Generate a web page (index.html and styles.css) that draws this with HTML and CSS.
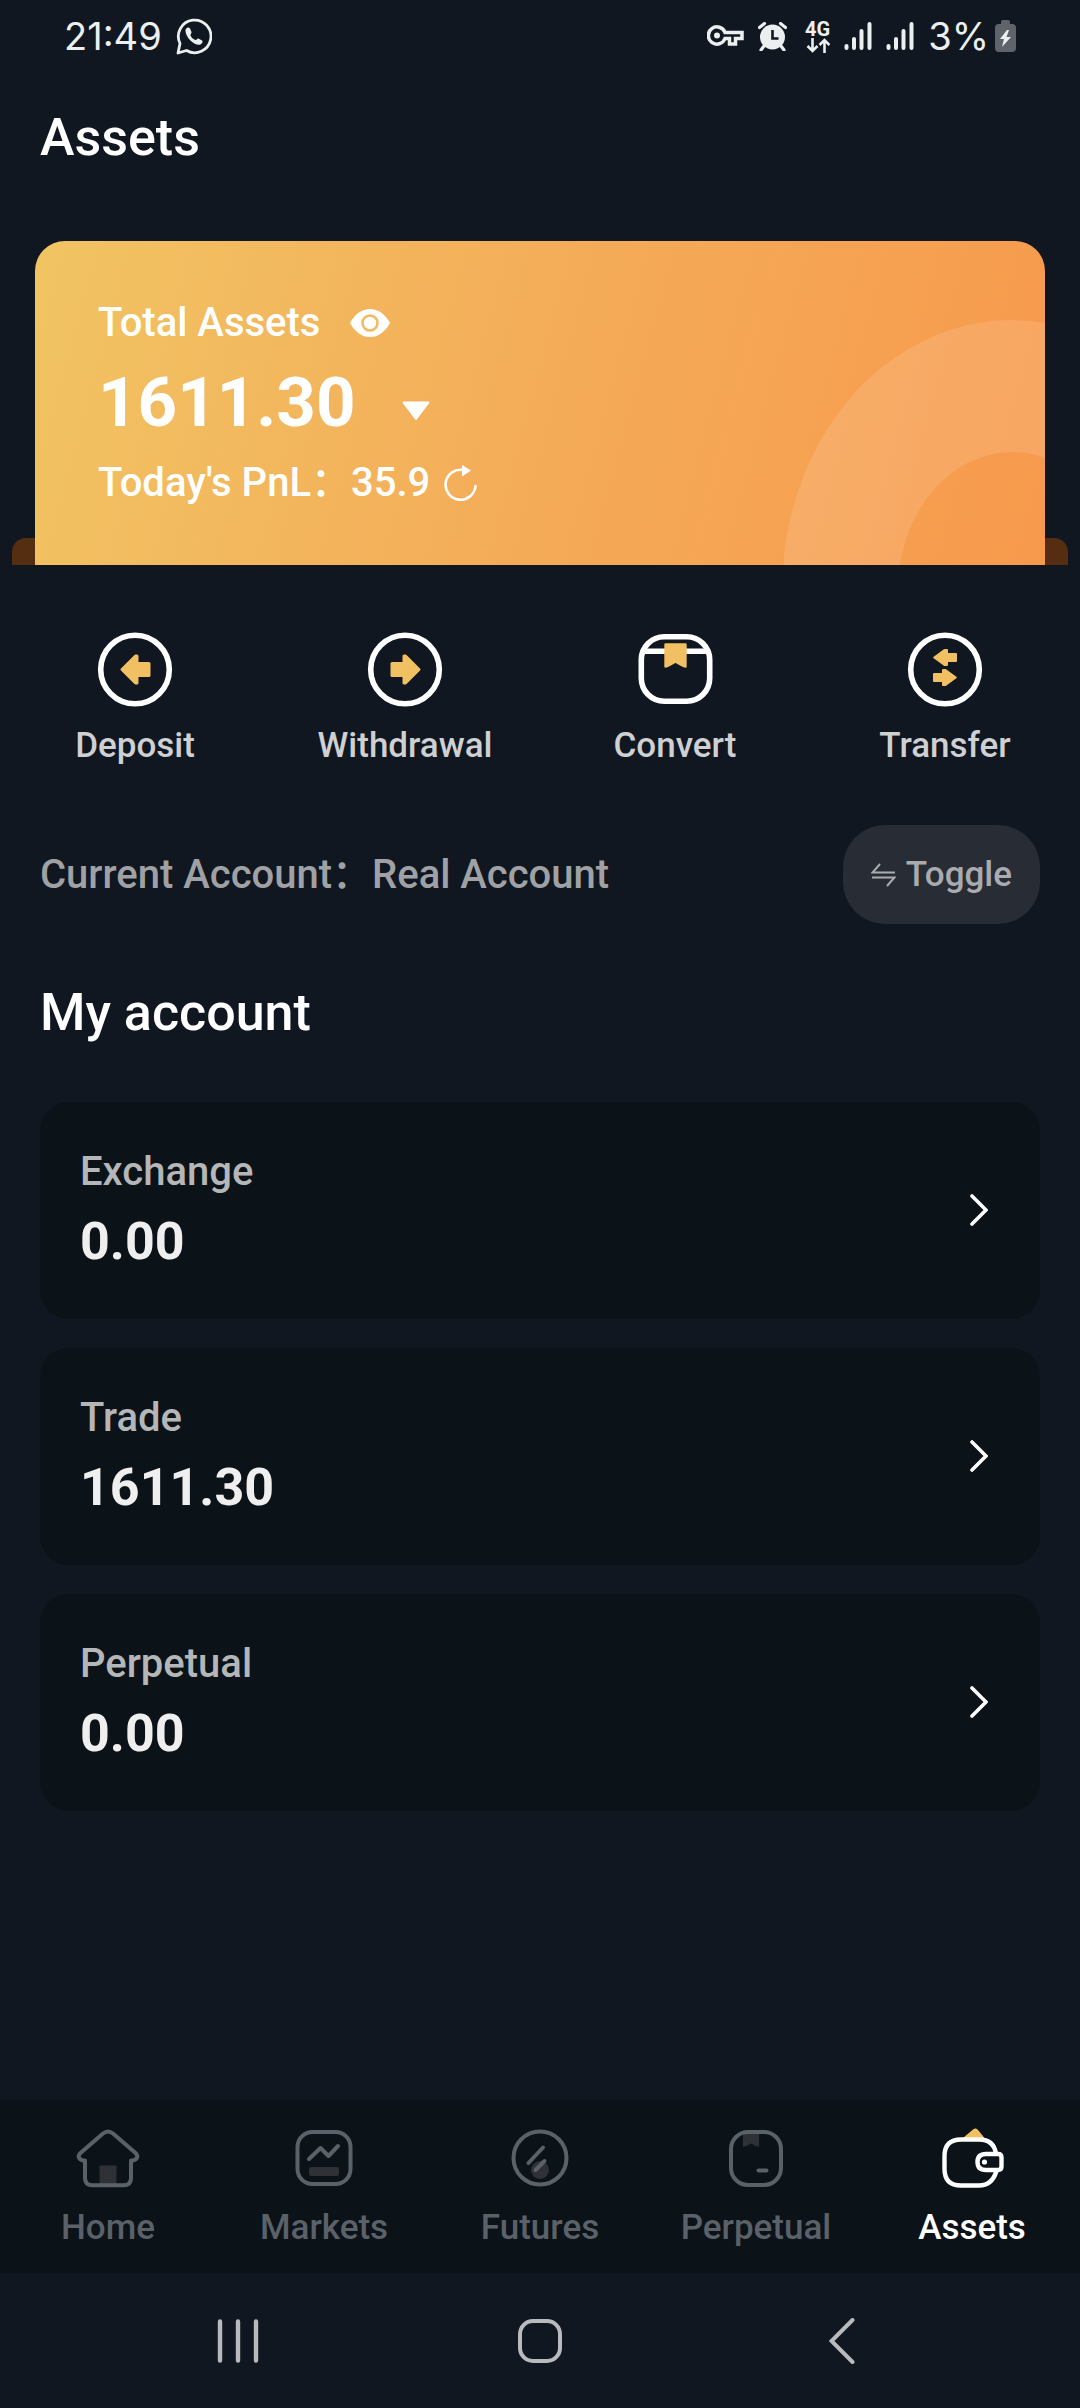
FILE: index.html
```html
<!DOCTYPE html>
<html lang="en">
<head>
    <meta charset="UTF-8">
    <meta name="viewport" content="width=device-width, initial-scale=1.0">
    <title>Assets</title>
    <link rel="stylesheet" href="styles.css">
</head>
<body>
    <div class="status-bar">
        <div class="status-left">
            <span>21:49</span>
            <svg width="36" height="37" viewBox="0 0 36 37" fill="none">
                <path d="M2 35l2-9.500A16.300 16.300 0 1 1 10.500 32.500z" stroke="#eceff0" stroke-width="2.800" stroke-linejoin="round"/>
                <path d="M9.500 13c-.5-3 3.500-4.500 4.500-2.500l1.500 3.500c.5 1-1.500 2.500-1 3.500 1 2 2.500 3.500 5 4.500 1 .3 2-1.800 3-1.400l3.500 1.900c1.700 1-.5 4.300-3 4.300-6 0-13-7.500-13.500-13.800z" fill="#eceff0"/>
            </svg>
        </div>
        <div class="status-right">
            <svg class="key-icon" width="37" height="22" viewBox="0 0 37 22" fill="none" stroke="#eceff0" stroke-width="3.500">
                <path d="M18 7.500A8.600 8.600 0 1 0 18 13.500h4.500v5.500h6v-5.500h6.500V7.500z"/>
                <circle cx="10" cy="10.500" r="3" fill="#eceff0" stroke="none"/>
            </svg>
            <svg class="alarm-icon" width="29" height="29" viewBox="0 0 29 29" fill="none">
                <circle cx="14.500" cy="15" r="12.500" fill="#eceff0"/>
                <path d="M1.500 5.500l5-4M27.500 5.500l-5-4M6 24l-3 4M23 24l3 4" stroke="#eceff0" stroke-width="3.200" stroke-linecap="round"/>
                <path d="M14.500 8v8.500h6" stroke="#101720" stroke-width="2.600"/>
            </svg>
            <div class="network">
                <span>4G</span>
                <svg width="24" height="15" viewBox="0 0 24 15" fill="none" stroke="#eceff0" stroke-width="2.600">
                    <path d="M6.500 0v13M1.500 8l5 5 5-5M18.500 15V2M13.500 7l5-5 5 5"/>
                </svg>
            </div>
            <svg class="signal-icon" width="28" height="30" viewBox="0 0 28 30" stroke="#eceff0" stroke-width="4" stroke-linecap="round">
                <path d="M2.500 25v2M10 18v9M17.500 10v17M25.500 3v24"/>
            </svg>
            <svg class="signal-icon" width="28" height="30" viewBox="0 0 28 30" stroke="#eceff0" stroke-width="4" stroke-linecap="round">
                <path d="M2.500 25v2M10 18v9M17.500 10v17M25.500 3v24"/>
            </svg>
            <div class="battery">
                <span>3%</span>
                <svg width="21" height="32" viewBox="0 0 21 32">
                    <path d="M6 4V2q0-2 2-2h5q2 0 2 2v2h2q4 0 4 4v20q0 4-4 4H4q-4 0-4-4V8q0-4 4-4z" fill="#60646a"/>
                    <path d="M12 10l-7 9h4l-2 8 9-10h-4.500l2.500-7z" fill="#eceff0"/>
                </svg>
            </div>
        </div>
    </div>

    <main class="content">
        <h1 class="page-title">Assets</h1>

        <section class="hero">
            <div class="balance-card">
                <svg class="ring" width="261" height="245" viewBox="0 0 261 245">
                    <path fill="#fff" fill-opacity=".12" fill-rule="evenodd" d="M-2 270a230 270 0 0 1 460 0a230 270 0 0 1-460 0zM114 270a114 138 0 0 0 228 0a114 138 0 0 0-228 0z"/>
                </svg>
                <div class="balance-label">
                    <span>Total Assets</span>
                    <button class="icon-button" aria-label="Hide balance">
                        <svg width="40" height="30" viewBox="0 0 40 30">
                            <path d="M0 15Q3 9 9 4.500Q14 1 20 1T31 4.500Q37 9 40 15Q37 21 31 25.500Q26 29 20 29T9 25.500Q3 21 0 15z" fill="#fff"/>
                            <circle cx="20" cy="15" r="7.500" fill="none" stroke="#f2b95f" stroke-width="2.600"/>
                        </svg>
                    </button>
                </div>
                <div class="balance-amount">
                    <span>1611.30</span>
                    <button class="icon-button" aria-label="Choose currency">
                        <svg width="28" height="20" viewBox="0 0 28 20"><path d="M1.500 1.500h25L14 18z" fill="#fff" stroke="#fff" stroke-width="2" stroke-linejoin="round"/></svg>
                    </button>
                </div>
                <div class="balance-pnl">
                    <span>Today's PnL：35.9</span>
                    <button class="icon-button" aria-label="Refresh">
                        <svg width="34" height="38" viewBox="0 0 34 38" fill="none">
                            <path d="M31.500 22a15 15 0 1 1-12-16" stroke="#fff" stroke-width="2.600" stroke-linecap="round"/>
                            <path d="M18 1l9 5.500-9 6z" fill="#fff"/>
                        </svg>
                    </button>
                </div>
            </div>
        </section>

        <nav class="actions">
            <a href="#deposit">
                <svg width="76" height="76" viewBox="0 0 76 76">
                    <circle cx="38" cy="37.500" r="34.300" fill="none" stroke="#fff" stroke-width="5.600"/>
                    <path d="M25 37.500L38.500 24h1.500v7.500h12v12H40V51h-1.500z" fill="#f0c062" stroke="#f0c062" stroke-width="3" stroke-linejoin="round"/>
                </svg>
                <span>Deposit</span>
            </a>
            <a href="#withdrawal">
                <svg width="76" height="76" viewBox="0 0 76 76">
                    <circle cx="38" cy="37.500" r="34.300" fill="none" stroke="#fff" stroke-width="5.600"/>
                    <path d="M52 37.500L38.500 24H37v7.500H25v12h12V51h1.500z" fill="#f0c062" stroke="#f0c062" stroke-width="3" stroke-linejoin="round"/>
                </svg>
                <span>Withdrawal</span>
            </a>
            <a href="#convert">
                <svg width="76" height="76" viewBox="0 0 76 76">
                    <rect x="4.300" y="4.800" width="68.400" height="64.400" rx="23" fill="none" stroke="#fff" stroke-width="5.600"/>
                    <path d="M7 19.300h63" stroke="#fff" stroke-width="5.600"/>
                    <path d="M28.500 12.500h20v22q-4-1-10-5-6 4-10 5z" fill="#f0c062" stroke="#f0c062" stroke-width="2.400" stroke-linejoin="round"/>
                </svg>
                <span>Convert</span>
            </a>
            <a href="#transfer">
                <svg width="76" height="76" viewBox="0 0 76 76" stroke-linejoin="round">
                    <circle cx="38" cy="37.500" r="34.300" fill="none" stroke="#fff" stroke-width="5.600"/>
                    <path d="M27.200 25.500L37.500 18h2.500v4h9v7h-9v4h-2.500zM48.800 45.500L38.500 38H36v4h-9v7h9v4h2.500z" fill="#f0c062" stroke="#f0c062" stroke-width="2"/>
                </svg>
                <span>Transfer</span>
            </a>
        </nav>

        <div class="current-account">
            <p>Current Account：Real Account</p>
            <button class="toggle-button">
                <svg width="25" height="24" viewBox="0 0 25 24" fill="none" stroke="#a9abae" stroke-width="2">
                    <path d="M9 1L1.500 9.500H24M1 14.500h22.500L16 23"/>
                </svg>
                <span>Toggle</span>
            </button>
        </div>

        <h2 class="section-title">My account</h2>

        <div class="account-list">
            <a class="account" href="#exchange">
                <div>
                    <p class="account-name">Exchange</p>
                    <p class="account-value">0.00</p>
                </div>
                <svg width="18" height="32" viewBox="0 0 18 32" fill="none"><path d="M2 2l14 14L2 30" stroke="#fff" stroke-width="3.600" stroke-linecap="round"/></svg>
            </a>
            <a class="account" href="#trade">
                <div>
                    <p class="account-name">Trade</p>
                    <p class="account-value">1611.30</p>
                </div>
                <svg width="18" height="32" viewBox="0 0 18 32" fill="none"><path d="M2 2l14 14L2 30" stroke="#fff" stroke-width="3.600" stroke-linecap="round"/></svg>
            </a>
            <a class="account" href="#perpetual-account">
                <div>
                    <p class="account-name">Perpetual</p>
                    <p class="account-value">0.00</p>
                </div>
                <svg width="18" height="32" viewBox="0 0 18 32" fill="none"><path d="M2 2l14 14L2 30" stroke="#fff" stroke-width="3.600" stroke-linecap="round"/></svg>
            </a>
        </div>
    </main>

    <nav class="tab-bar">
        <a href="#home">
            <svg width="64" height="64" viewBox="0 0 64 64" fill="none">
                <path d="M24 39h16v18H24z" fill="#2f3136" stroke="#2f3136" stroke-linejoin="round"/>
                <path d="M27 6.500Q32 2.500 37 6.500L59.500 26Q62.500 29 60.500 31.500Q59 33.500 55 33.500V51Q55 58.300 47.500 58.300H16.500Q9 58.300 9 51V33.500Q5 33.500 3.500 31.500Q1.500 29 4.500 26z" stroke="#5b6168" stroke-width="4" stroke-linejoin="round"/>
            </svg>
            <span>Home</span>
        </a>
        <a href="#markets">
            <svg width="64" height="64" viewBox="0 0 64 64" fill="none" stroke="#5b6168" stroke-width="4">
                <rect x="17" y="40" width="30" height="9" rx="2" fill="#2f3136" stroke="none"/>
                <rect x="5.500" y="5" width="53" height="52" rx="15"/>
                <path d="M17 32l11.500-11 8 8L46 19" stroke-linecap="round" stroke-linejoin="round"/>
            </svg>
            <span>Markets</span>
        </a>
        <a href="#futures">
            <svg width="64" height="64" viewBox="0 0 64 64" fill="none" stroke="#5b6168" stroke-width="4">
                <circle cx="32" cy="43" r="9" fill="#2f3136" stroke="none"/>
                <circle cx="32" cy="31" r="26.500"/>
                <path d="M20.500 36L35 20.500M27.500 43l9-9" stroke-linecap="round"/>
            </svg>
            <span>Futures</span>
        </a>
        <a href="#perpetual">
            <svg width="64" height="64" viewBox="0 0 64 64" fill="none" stroke="#5b6168" stroke-width="4">
                <path d="M19 6h16v14q-4-.5-8-3.500-4 3-8 3.500z" fill="#2f3136" stroke="none"/>
                <rect x="7" y="5" width="50" height="53" rx="17"/>
                <path d="M34.500 43.500h8" stroke-linecap="round"/>
            </svg>
            <span>Perpetual</span>
        </a>
        <a class="active" href="#assets">
            <svg width="64" height="64" viewBox="0 0 64 64" fill="none" stroke="#fff" stroke-width="4.400">
                <path d="M23 11L33 2.500q3-2.500 5.500 1L44.500 11z" fill="#f0c062" stroke="none"/>
                <path d="M56 27Q54 12.500 39 12.500H21Q4.500 12.500 4.500 29v13Q4.500 58.500 21 58.500H39Q52 58.500 56.500 44"/>
                <path d="M46 27h12q3.500 0 3.500 3.500v9q0 3.500-3.500 3.500H46q-8.500 0-8.500-8t8.500-8z"/>
                <circle cx="44.500" cy="35" r="2.600" fill="#fff" stroke="none"/>
            </svg>
            <span>Assets</span>
        </a>
    </nav>

    <div class="system-nav">
        <button class="icon-button" aria-label="Recent apps">
            <svg width="44" height="44" viewBox="0 0 44 44" stroke="#b9babd" stroke-width="4.400" stroke-linecap="round"><path d="M4 2.500v39M22 2.500v39M40 2.500v39"/></svg>
        </button>
        <button class="icon-button" aria-label="Home screen">
            <svg width="44" height="44" viewBox="0 0 44 44" fill="none" stroke="#b9babd" stroke-width="4"><rect x="2" y="2" width="40" height="40" rx="13"/></svg>
        </button>
        <button class="icon-button" aria-label="Back">
            <svg width="26" height="46" viewBox="0 0 26 46" fill="none" stroke="#b9babd" stroke-width="4" stroke-linecap="round"><path d="M23.500 2L2.500 23l21 21"/></svg>
        </button>
    </div>
</body>
</html>
```
FILE: styles.css
```css
* {
    box-sizing: border-box;
    margin: 0;
    padding: 0;
}

body {
    display: flex;
    flex-direction: column;
    min-height: 100vh;
    background-color: #101720;
    color: white;
    font-family: Roboto, "Noto Sans CJK SC", sans-serif;
    font-weight: 500;
    font-size: 40px;
    line-height: 48px;
}

a {
    color: inherit;
    text-decoration: none;
}

button {
    border: none;
    background: none;
    color: inherit;
    font: inherit;
    cursor: pointer;
}

svg {
    display: block;
    flex-shrink: 0;
}

.icon-button {
    display: flex;
    align-items: center;
    justify-content: center;
}

/* status bar */
.status-bar {
    display: flex;
    justify-content: space-between;
    align-items: center;
    height: 72px;
    padding: 0 64px;
    color: #eceff0;
    font-family: Inter, sans-serif;
    font-size: 38px;
    font-weight: 400;
}

.status-left, .status-right, .battery {
    display: flex;
    align-items: center;
    gap: 14px;
}

.battery {
    gap: 6px;
}

.network {
    display: flex;
    flex-direction: column;
    align-items: center;
    font-family: Roboto, sans-serif;
    font-size: 20px;
    line-height: 18px;
    font-weight: 700;
    margin-left: 4px;
}

/* page */
.content {
    padding-bottom: 60px;
}

.page-title, .section-title {
    padding: 0 40px;
    font-size: 52px;
    line-height: 60px;
    font-weight: 500;
}

.page-title {
    margin: 36px 0 73px;
}

.section-title {
    margin: 59px 0 59px;
}

.hero {
    position: relative;
    padding: 0 35px;
}

.hero::before {
    content: "";
    position: absolute;
    left: 12px;
    right: 12px;
    bottom: 0;
    height: 27px;
    border-radius: 14px 14px 0 0;
    background-color: #552d10;
}

.balance-card {
    position: relative;
    overflow: hidden;
    display: flex;
    flex-direction: column;
    gap: 14px;
    padding: 58px 63px 58px;
    border-radius: 30px 30px 0 0;
    background: linear-gradient(105deg, #f1c463, #f4ac58 50%, #f7994c);
}

.ring {
    position: absolute;
    right: 0;
    bottom: 0;
}

.balance-label, .balance-amount, .balance-pnl {
    position: relative;
    display: flex;
    align-items: center;
}

.balance-label {
    gap: 30px;
}

.balance-amount {
    gap: 46px;
    font-size: 69px;
    line-height: 84px;
    font-weight: 700;
}

.balance-amount .icon-button {
    padding-top: 16px;
}

.balance-pnl {
    gap: 14px;
}

.actions {
    display: grid;
    grid-template-columns: repeat(4, 1fr);
    margin-top: 67px;
    font-size: 35px;
    line-height: 42px;
    color: #cfd0d2;
}

.actions a {
    display: flex;
    flex-direction: column;
    align-items: center;
    gap: 17px;
}

.current-account {
    display: flex;
    justify-content: space-between;
    align-items: center;
    margin-top: 58px;
    padding: 0 40px;
    color: #9fa1a4;
}

.toggle-button {
    display: flex;
    align-items: center;
    gap: 10px;
    padding: 28px;
    border-radius: 42px;
    background-color: #282d35;
    color: #a9abae;
    font-size: 35px;
    line-height: 43px;
}

.account-list {
    display: flex;
    flex-direction: column;
    gap: 29px;
    padding: 0 40px;
}

.account {
    display: flex;
    justify-content: space-between;
    align-items: center;
    padding: 46px 52px 47px 40px;
    border-radius: 29px;
    background-color: #0b1218;
}

.account-name {
    color: #b4b6b8;
    margin-bottom: 16px;
}

.account-value {
    color: #efefef;
    font-size: 52px;
    line-height: 60px;
    font-weight: 700;
}

/* bottom navigation */
.tab-bar {
    display: grid;
    grid-template-columns: repeat(5, 1fr);
    margin-top: auto;
    padding: 27px 0 24px;
    background-color: #0b1218;
    color: #5b6168;
    font-size: 35px;
    line-height: 42px;
}

.tab-bar a {
    display: flex;
    flex-direction: column;
    align-items: center;
    gap: 16px;
}

.tab-bar .active {
    color: white;
}

.system-nav {
    display: flex;
    height: 135px;
    padding: 0 8%;
}

.system-nav .icon-button {
    flex: 1;
}
```
